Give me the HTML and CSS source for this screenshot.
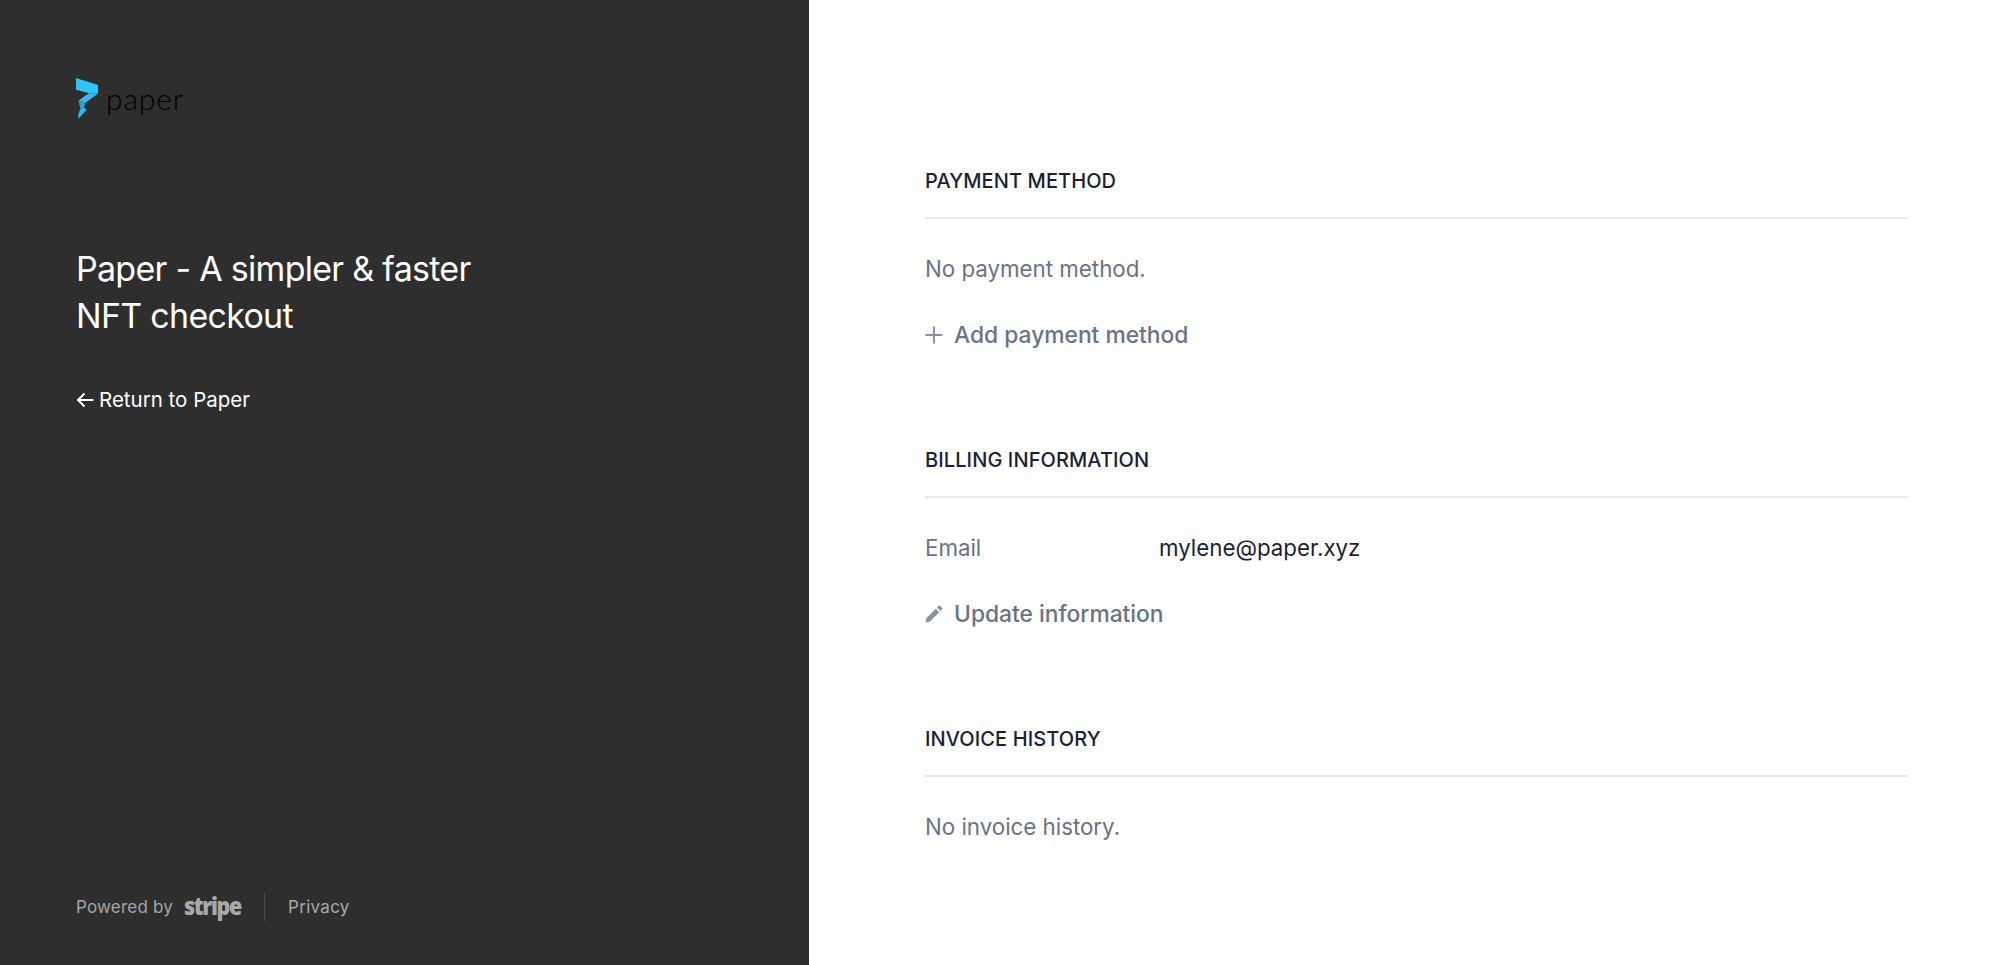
FILE: index.html
```html
<!DOCTYPE html>
<html lang="en">
<head>
<meta charset="utf-8">
<title>Paper billing</title>
<link rel="stylesheet" href="styles.css">
</head>
<body>
<div class="page">
  <aside class="side">
    <div class="brand">
      <svg class="brand-mark" viewBox="0 0 23 41" width="23" height="41" aria-hidden="true">
        <path d="M0 0 L22 7 L22 15.5 L13 15.3 L0 11.7 Z" fill="#2cc5f6"/>
        <path d="M13 15.3 L22 15.5 L9.5 24.8 L2.5 22.5 Z" fill="#3bb9ee"/>
        <path d="M2.5 22.5 L9.5 24.8 L8 29.5 L10.5 32 L2.5 40.5 L2.5 36 L4.5 31 Z" fill="#1fa5e0"/>
        <path d="M2.5 36 L4.5 31 L8 29.5 L10.5 32 L2.5 40.5 Z" fill="#2bb6ec"/>
      </svg>
      <span class="brand-name">paper</span>
    </div>
    <h1 class="headline">Paper - A simpler &amp; faster<br>NFT checkout</h1>
    <a class="back" href="#">
      <svg class="back-icon" viewBox="0 0 18 16" width="18" height="16" aria-hidden="true">
        <path d="M17.5 8 H2 M8.5 1.5 L2 8 L8.5 14.5" fill="none" stroke="#fff" stroke-width="2"/>
      </svg>
      <span>Return to Paper</span>
    </a>
    <footer class="foot">
      <span class="powered">Powered by</span>
      <span class="stripe">stripe</span>
      <span class="divider"></span>
      <a class="privacy" href="#">Privacy</a>
    </footer>
  </aside>
  <main class="content">
    <section class="section">
      <h2 class="section-title">PAYMENT METHOD</h2>
      <p class="muted">No payment method.</p>
      <a class="action" href="#">
        <svg class="action-icon" viewBox="0 0 18 18" width="18" height="18" aria-hidden="true">
          <path d="M9 0.5 V17.5 M0.5 9 H17.5" fill="none" stroke="#8792a5" stroke-width="2"/>
        </svg>
        <span>Add payment method</span>
      </a>
    </section>
    <section class="section">
      <h2 class="section-title">BILLING INFORMATION</h2>
      <div class="field">
        <span class="field-label">Email</span>
        <span class="field-value">mylene@paper.xyz</span>
      </div>
      <a class="action" href="#">
        <svg class="action-icon" viewBox="0 0 18 18" width="18" height="18" aria-hidden="true">
          <path d="M0.5 17.5 L1.5 13 L10.8 3.7 L14.3 7.2 L5 16.5 Z M12 2.5 L13.6 0.9 Q14.4 0.2 15.2 0.9 L17.1 2.8 Q17.8 3.6 17.1 4.4 L15.5 6 Z" fill="#8792a5"/>
        </svg>
        <span>Update information</span>
      </a>
    </section>
    <section class="section">
      <h2 class="section-title">INVOICE HISTORY</h2>
      <p class="muted">No invoice history.</p>
    </section>
  </main>
</div>
</body>
</html>
```
FILE: styles.css
```css
* { box-sizing: border-box; }
html, body { margin: 0; height: 100%; }
body {
  font-family: Inter, "Liberation Sans", sans-serif;
  background: #fff;
  overflow: hidden;
}
a { text-decoration: none; color: inherit; }
.page { display: flex; height: 965px; }
.side {
  width: 809px;
  background: #2e2e2e;
  color: #fff;
  padding: 78px 76px 0;
  display: flex;
  flex-direction: column;
}
.brand { display: flex; align-items: center; gap: 7px; height: 41px; }
.brand-mark { display: block; flex: none; }
.brand-name {
  font-family: Lato, sans-serif;
  font-size: 30px;
  color: #000;
  letter-spacing: 0.85px;
  line-height: 41px;
  font-weight: 300;
}
.headline {
  margin: 126px 0 0;
  font-size: 34px;
  line-height: 47px;
  font-weight: 400;
  letter-spacing: -0.72px;
}
.back {
  display: flex;
  align-items: center;
  gap: 5px;
  margin-top: 47px;
  font-size: 20.5px;
  line-height: 28px;
  font-weight: 400;
}
.back-icon { display: block; flex: none; }
.foot {
  margin-top: auto;
  margin-bottom: 44px;
  height: 28px;
  display: flex;
  align-items: center;
  color: #a6a6a6;
  font-size: 17px;
}
.powered { letter-spacing: 0.2px; }
.stripe {
  font-family: "Open Sans", sans-serif;
  font-weight: 800;
  font-size: 25px;
  letter-spacing: -1.6px;
  width: 56px;
  margin-left: 11px;
  margin-bottom: 4px;
  color: #a9a9a9;
  line-height: 28px;
  transform: scaleX(0.86);
  transform-origin: left center;
}
.divider { width: 1px; height: 28px; background: #4d4d4d; margin: 0 23px 0 24px; }
.privacy { letter-spacing: 0.3px; color: #aaa; }
.content {
  flex: 1;
  padding: 168px 92px 0 116px;
}
.section { height: 279px; }
.section-title {
  margin: 0;
  height: 51px;
  line-height: 26px;
  font-size: 20px;
  font-weight: 500;
  letter-spacing: 0.1px;
  color: #1a1f36;
  border-bottom: 2px solid #e6e9ec;
}
.muted, .field {
  margin: 34px 0 0;
  font-size: 22.3px;
  line-height: 32px;
  color: #697386;
}
.field { display: flex; }
.field-label { width: 234px; }
.field-value { color: #1a1f36; }
.action {
  display: flex;
  align-items: center;
  gap: 11px;
  margin-top: 34px;
  font-size: 22.8px;
  line-height: 32px;
  font-weight: 500;
  color: #697386;
}
.action-icon { display: block; flex: none; }
```
